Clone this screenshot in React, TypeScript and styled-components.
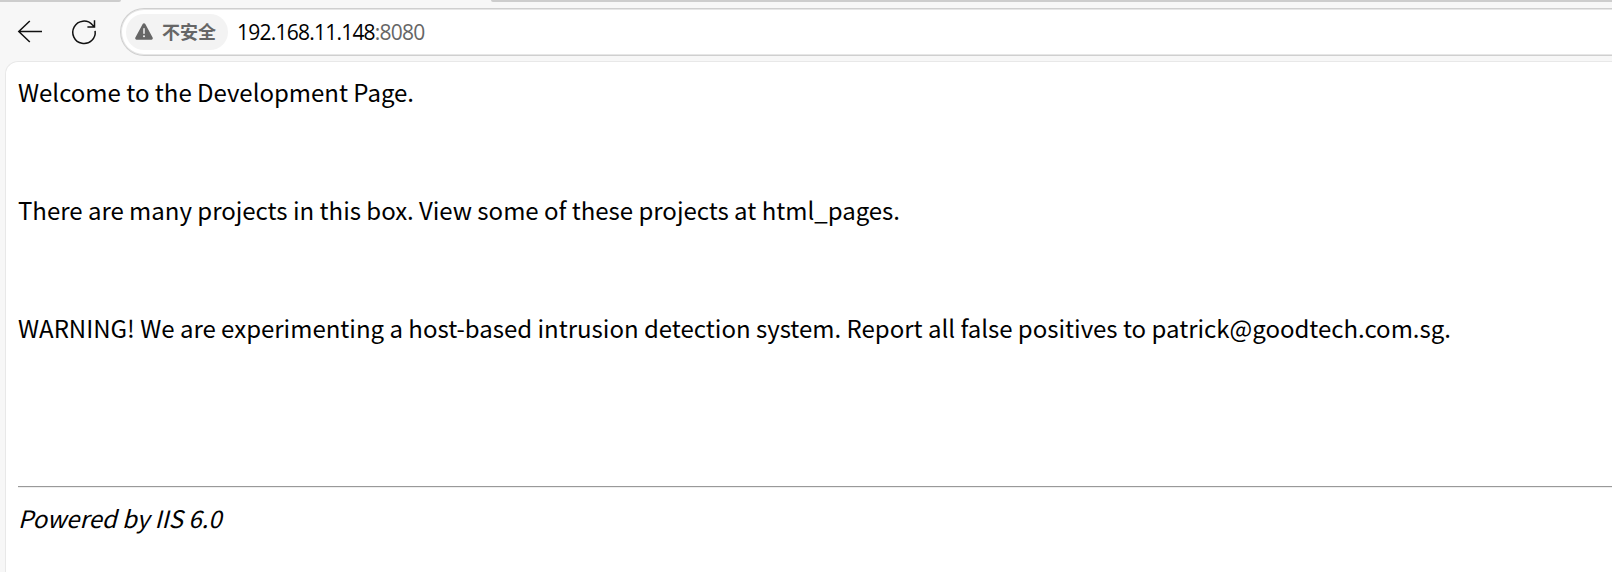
import React from 'react';
import styled, { createGlobalStyle } from 'styled-components';

const GlobalStyle = createGlobalStyle`
  * { box-sizing: border-box; }
  body { margin: 0; background: #f7f7f7; overflow: hidden; }
`;

const Browser = styled.div`
  display: flex;
  flex-direction: column;
  width: 100vw;
  height: 100vh;
  overflow: hidden;
  background: #f7f7f7;
`;

const TabStrip = styled.div`
  display: flex;
  justify-content: space-between;
  flex: none;
  height: 2px;
`;

const StripSegment = styled.div<{ $side: 'left' | 'right' }>`
  width: ${p => (p.$side === 'left' ? '121px' : 'calc(100% - 491px)')};
  background: #cdcdcd;
  border-radius: ${p => (p.$side === 'left' ? '0 0 2px 0' : '0 0 0 2px')};
`;

const Toolbar = styled.div`
  display: flex;
  align-items: flex-start;
  flex: none;
  height: 59px;
  padding: 6px 0 0 16px;
`;

const ToolButton = styled.button`
  display: flex;
  align-items: center;
  justify-content: center;
  width: 28px;
  height: 48px;
  margin: 0 26px 0 0;
  padding: 0;
  border: 0;
  background: none;
`;

const AddressBar = styled.div`
  display: flex;
  align-items: center;
  flex: 1;
  height: 48px;
  margin-left: -4px;
  padding-left: 5px;
  background: #fff;
  border: solid #cfcfcf;
  border-width: 1px 0 1px 1px;
  border-radius: 24px 0 0 24px;
  box-shadow: inset 1px 0 0 #e6e6e6, inset 0 1px 0 #e6e6e6, inset 0 -1px 0 #e6e6e6;
`;

const SecurityChip = styled.div`
  display: flex;
  align-items: center;
  width: 102px;
  height: 36px;
  padding-left: 9px;
  gap: 9px;
  border-radius: 18px;
  background: #f3f3f3;
  color: #666;
  font: 700 18px/26px 'Noto Sans CJK SC', sans-serif;
  white-space: nowrap;
`;

const ChipLabel = styled.span`
  padding-bottom: 2px;
`;

const Address = styled.div`
  margin-left: 9px;
  color: #000;
  font: 400 21px/28px 'Open Sans', sans-serif;
  letter-spacing: -0.77px;
  white-space: nowrap;
`;

const Port = styled.span`
  color: #666;
`;

const Page = styled.main`
  flex: 1;
  margin-left: 5px;
  padding: 10px 0 0 12px;
  background: #fff;
  border: solid #e8e8e8;
  border-width: 1px 0 0 1px;
  border-radius: 13px 0 0 0;
  color: #000;
  font: 400 24px/39px 'Noto Sans CJK SC', sans-serif;
  letter-spacing: -0.01px;
`;

const Line = styled.p`
  margin: 0 0 79px;
  white-space: nowrap;
`;

const Divider = styled.hr`
  height: 2px;
  margin: 139px 0 10px;
  border: 0;
  border-top: 1px solid #999;
  background: #eee;
`;

const Signature = styled.address`
  font-style: italic;
`;

export default function App() {
  return (
    <Browser>
      <GlobalStyle />
      <TabStrip>
        <StripSegment $side="left" />
        <StripSegment $side="right" />
      </TabStrip>
      <Toolbar>
        <ToolButton aria-label="Back">
          <svg width="28" height="28" viewBox="0 0 28 28" fill="none" stroke="#111" strokeWidth="1.5">
            <path d="M26 13.5H2.5M13.8 3 2.8 13.5 13.8 24" />
          </svg>
        </ToolButton>
        <ToolButton aria-label="Reload">
          <svg width="28" height="28" viewBox="0 0 28 28" fill="none" stroke="#111" strokeWidth="1.5">
            <path d="M25.1 12.8A11.2 11.2 0 1 1 22.3 6.8L24.4 9M24.5 2.3V9.1H17.4" />
          </svg>
        </ToolButton>
        <AddressBar>
          <SecurityChip>
            <svg width="18" height="18" viewBox="0 0 18 18">
              <path d="M7.7 1.1a1.5 1.5 0 0 1 2.6 0l7.3 13.5a1.4 1.4 0 0 1-1.2 2.1H1.6A1.4 1.4 0 0 1 .4 14.6Z" fill="#666" />
              <path d="M9 5.7v4.6" stroke="#f3f3f3" strokeWidth="1.5" strokeLinecap="round" />
              <circle cx="9" cy="13.2" r="1" fill="#f3f3f3" />
            </svg>
            <ChipLabel>不安全</ChipLabel>
          </SecurityChip>
          <Address>192.168.11.148<Port>:8080</Port></Address>
        </AddressBar>
      </Toolbar>
      <Page>
        <Line>Welcome to the Development Page.</Line>
        <Line>There are many projects in this box. View some of these projects at html_pages.</Line>
        <Line>WARNING! We are experimenting a host-based intrusion detection system. Report all false positives to patrick@goodtech.com.sg.</Line>
        <Divider />
        <Signature>Powered by IIS 6.0</Signature>
      </Page>
    </Browser>
  );
}
